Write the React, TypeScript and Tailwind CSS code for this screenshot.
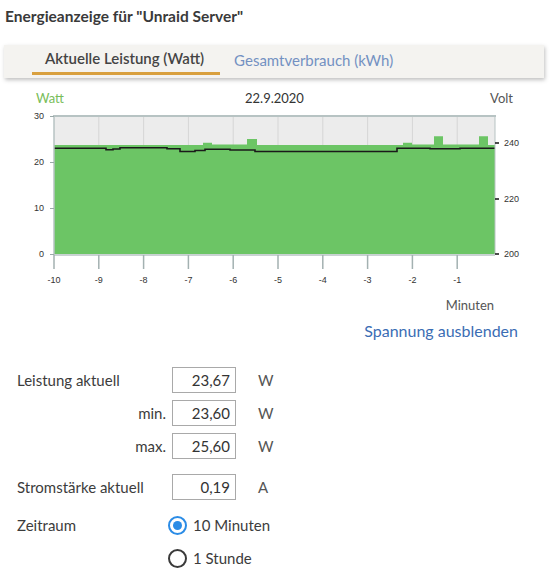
import React from 'react';

const yW = (w: number) => 254 - w * 4.6;

// [x0, x1, watt]
const wattSteps: [number, number, number][] = [
  [54, 203, 23.7],
  [203, 212, 24.2],
  [212, 247, 23.8],
  [247, 257, 25.0],
  [257, 403, 23.7],
  [403, 412, 24.2],
  [412, 434, 23.8],
  [434, 443, 25.6],
  [443, 479, 23.8],
  [479, 488, 25.6],
  [488, 495, 23.7],
];

// [x0, x1, y]
const voltSteps: [number, number, number][] = [
  [54, 106, 148.3],
  [106, 113, 149.8],
  [113, 120, 149],
  [120, 167, 147.7],
  [167, 180, 148.7],
  [180, 195, 151.5],
  [195, 205, 150.5],
  [205, 230, 149.2],
  [230, 255, 150],
  [255, 397, 151.5],
  [397, 430, 148.3],
  [430, 460, 148.8],
  [460, 495, 148.3],
];

function stepPath(steps: [number, number, number][], toY: (v: number) => number) {
  return steps
    .map(([x0, x1, v], i) => `${i === 0 ? 'M' : 'L'}${x0},${toY(v)} L${x1},${toY(v)}`)
    .join(' ');
}

const xTicks = [-10, -9, -8, -7, -6, -5, -4, -3, -2, -1];
const xOf = (m: number) => 54 + (m + 10) * 44.8;

function Chart() {
  const area = `${stepPath(wattSteps, yW)} L495,254 L54,254 Z`;
  const volt = stepPath(voltSteps, (y) => y);
  return (
    <svg width={552} height={182} viewBox="0 108 552 182" className="block mt-[2px]">
      <rect x={54} y={116} width={441} height={138} fill="#ececec" />
      {xTicks.slice(1).map((m) => (
        <line key={m} x1={xOf(m)} x2={xOf(m)} y1={116} y2={150} stroke="#d6d6d6" strokeWidth={1} />
      ))}
      <path d={area} fill="#6cc565" />
      <path d={volt} fill="none" stroke="#1a1a1a" strokeWidth={1.6} />
      <line x1={53} x2={496} y1={116} y2={116} stroke="#b7c3c3" strokeWidth={2} />
      <line x1={495} x2={495} y1={116} y2={254} stroke="#b7c3c3" strokeWidth={1} />
      <line x1={54} x2={54} y1={115} y2={255} stroke="#b7c3c3" strokeWidth={1.5} />
      <line x1={54} x2={495} y1={255} y2={255} stroke="#b7c3c3" strokeWidth={1.5} />
      {[0, 10, 20, 30].map((v) => (
        <g key={v}>
          <line x1={50} x2={54} y1={yW(v) + 0.5} y2={yW(v) + 0.5} stroke="#9aa9a9" strokeWidth={1} />
          <text x={44} y={yW(v) + 3} textAnchor="end" fontSize={9} fill="#333" fontFamily="'Liberation Sans', Arial, sans-serif">
            {v}
          </text>
        </g>
      ))}
      {xTicks.map((m) => (
        <g key={m}>
          <line x1={xOf(m)} x2={xOf(m)} y1={255} y2={269} stroke="#a3b1b1" strokeWidth={1.5} />
          <text x={xOf(m)} y={283} textAnchor="middle" fontSize={9} fill="#333" fontFamily="'Liberation Sans', Arial, sans-serif">
            {m}
          </text>
        </g>
      ))}
      {[
        [240, 143],
        [220, 199],
        [200, 254],
      ].map(([v, y]) => (
        <g key={v}>
          <line x1={495} x2={499} y1={y} y2={y} stroke="#111" strokeWidth={1.5} />
          <text x={504} y={y + 3} fontSize={9} fill="#333" fontFamily="'Liberation Sans', Arial, sans-serif">
            {v}
          </text>
        </g>
      ))}
    </svg>
  );
}

function ValueRow({ label, value, unit, indent = false }: { label: string; value: string; unit: string; indent?: boolean }) {
  return (
    <div className="flex items-center h-[26px]">
      <div className={indent ? 'w-[166px] text-right' : 'w-[166px] pl-[17px]'}>{label}</div>
      <div className="ml-[6px] w-[64px] h-[26px] border border-[#a9a9a9] text-right pr-[5px] leading-[24px] text-[#333]">
        {value}
      </div>
      <div className="ml-[22px] text-[#555]">{unit}</div>
    </div>
  );
}

function Radio({ checked, label }: { checked: boolean; label: string }) {
  return (
    <div className="flex items-center h-[20px]">
      {checked ? (
        <span className="w-[19px] h-[19px] rounded-full border-2 border-[#2b8ce6] flex items-center justify-center">
          <span className="w-[9px] h-[9px] rounded-full bg-[#2b8ce6]" />
        </span>
      ) : (
        <span className="w-[19px] h-[19px] rounded-full border-2 border-[#3a3a3a]" />
      )}
      <span className="ml-[6px] text-[15px]">{label}</span>
    </div>
  );
}

export default function App() {
  return (
    <div
      className="w-[552px] h-[583px] bg-white text-[#3c3c3c] overflow-hidden"
      style={{ fontFamily: "Lato, 'Noto Sans', sans-serif" }}
    >
      <div className="pl-[5px] pt-[6px] h-[26px] text-[15.5px] font-bold leading-[20px] text-[#3a3a3a]">
        Energieanzeige für "Unraid Server"
      </div>

      <div className="mt-[19px] ml-[4px] w-[540px] h-[33px] bg-[#f4f3f0] shadow-[1px_2px_4px_rgba(0,0,0,0.25)] flex">
        <div className="ml-[28px] pl-[13px] pr-[16px] h-[30px] flex items-center border-b-[3px] border-[#d9a03f] text-[15px] font-semibold text-[#444]">
          Aktuelle Leistung (Watt)
        </div>
        <div className="ml-[14px] h-[30px] flex items-center text-[15px] text-[#7391c2]">
          Gesamtverbrauch (kWh)
        </div>
      </div>

      <div className="mt-[12px] h-[16px] flex items-center text-[13px] leading-[16px]">
        <span className="ml-[36px] text-[#79bd59]">Watt</span>
        <span className="ml-[181px] text-[#333]">22.9.2020</span>
        <span className="ml-auto mr-[39px] text-[#555]">Volt</span>
      </div>

      <Chart />

      <div className="mt-[6px] h-[18px] pr-[58px] text-right text-[13px] text-[#555]">Minuten</div>
      <div className="mt-[5px] h-[20px] pr-[34px] text-right text-[16px] text-[#3b6db4]">Spannung ausblenden</div>

      <div className="mt-[28px] text-[15px] flex flex-col gap-[7px]">
        <ValueRow label="Leistung aktuell" value="23,67" unit="W" />
        <ValueRow label="min." value="23,60" unit="W" indent />
        <ValueRow label="max." value="25,60" unit="W" indent />
        <div className="mt-[8px]">
          <ValueRow label="Stromstärke aktuell" value="0,19" unit="A" />
        </div>
      </div>

      <div className="mt-[15px] flex text-[15px]">
        <div className="w-[168px] pl-[17px] leading-[20px]">Zeitraum</div>
        <div className="flex flex-col gap-[13px]">
          <Radio checked label="10 Minuten" />
          <Radio checked={false} label="1 Stunde" />
        </div>
      </div>
    </div>
  );
}
